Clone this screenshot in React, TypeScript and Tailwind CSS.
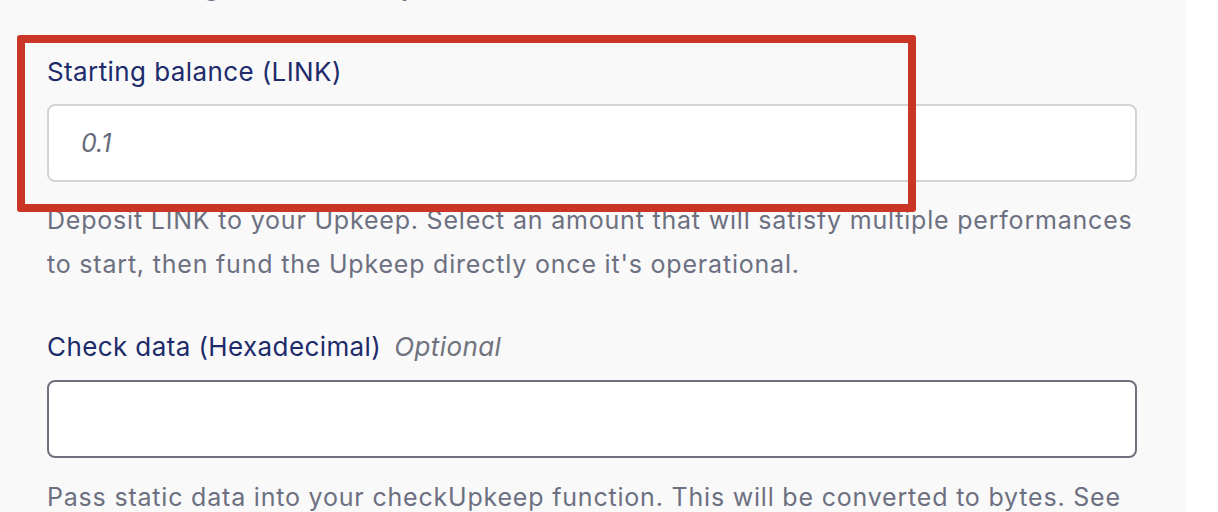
export default function App() {
  return (
    <div className="w-[1218px] h-[512px] overflow-hidden bg-white flex font-['Inter','Liberation_Sans',sans-serif]">
      <div className="relative w-[1186px] h-full bg-[#f9f9fa] pl-[47px] pr-[49px]">
        {/* tail of the previous field's help text, cut off by the window */}
        <div className="h-[3px] overflow-hidden">
          <p className="-mt-[35px] text-[25px] leading-[44px] tracking-[0.8px] text-[#6c7080] whitespace-nowrap">
            Set the max gas limit used by the function.
          </p>
        </div>

        <label className="block mt-[53px] text-[26px] leading-[32px] tracking-[0.4px] text-[#1d2b6a]">
          Starting balance (LINK)
        </label>
        <input
          type="text"
          placeholder="0.1"
          className="block mt-[16px] w-full h-[78px] bg-white border-2 border-[#d3d3d8] rounded-[8px] px-[32px] text-[25px] text-[#1d2b6a] outline-none placeholder:italic placeholder:text-[#656a7a]"
        />
        <p className="mt-[16px] text-[25px] leading-[44px] tracking-[0.8px] text-[#6c7080] whitespace-nowrap">
          Deposit LINK to your Upkeep. Select an amount that will satisfy multiple performances
          <br />
          to start, then fund the Upkeep directly once it's operational.
        </p>

        <label className="flex items-baseline gap-[13px] mt-[45px] text-[26px] leading-[32px] tracking-[0.4px]">
          <span className="text-[#1d2b6a]">Check data (Hexadecimal)</span>
          <span className="italic text-[#70737e]">Optional</span>
        </label>
        <input
          type="text"
          className="block mt-[17px] w-full h-[78px] bg-white border-2 border-[#6e717d] rounded-[8px] px-[32px] text-[25px] outline-none"
        />
        <p className="mt-[17px] text-[25px] leading-[44px] tracking-[0.8px] text-[#6c7080] whitespace-nowrap">
          Pass static data into your checkUpkeep function. This will be converted to bytes. See
        </p>

        {/* annotation highlight */}
        <div className="absolute left-[17px] top-[35px] w-[899px] h-[177px] border-[8px] border-[#cb3525] rounded-[3px] pointer-events-none" />
      </div>
    </div>
  );
}
